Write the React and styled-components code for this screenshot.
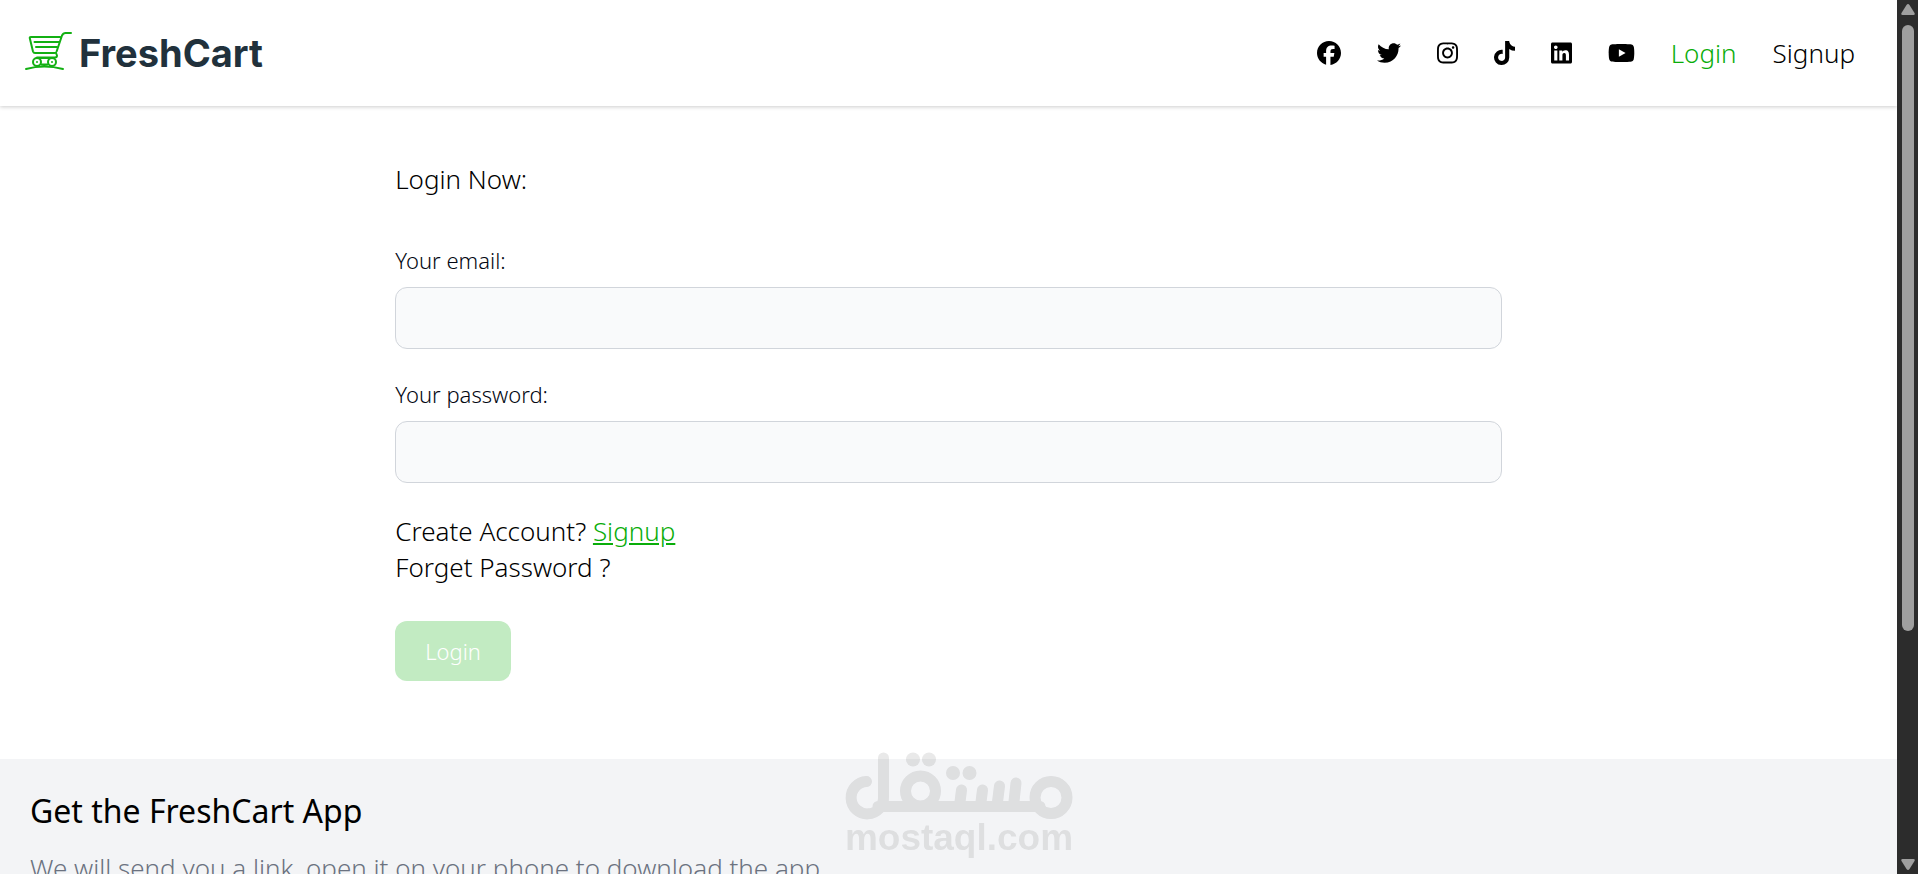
import React from "react";
import styled, { createGlobalStyle } from "styled-components";
import {
  FaFacebook,
  FaTwitter,
  FaInstagram,
  FaTiktok,
  FaLinkedin,
  FaYoutube,
} from "react-icons/fa6";

const GlobalStyle = createGlobalStyle`
  *, *::before, *::after { box-sizing: border-box; }
  body {
    margin: 0;
    background: #fff;
    color: #000;
    font-family: "Noto Sans", "Open Sans", sans-serif;
    font-size: 26px;
    font-weight: 300;
    line-height: 36px;
  }
  h1, h2, p, ul { margin: 0; padding: 0; }
`;

const Shell = styled.div`
  display: flex;
  height: 100vh;
  overflow: hidden;
`;

const Page = styled.div`
  flex: 1;
  min-width: 0;
  overflow: hidden;
`;

const Navbar = styled.header`
  display: flex;
  align-items: center;
  justify-content: space-between;
  padding: 31px 42px 31px 24px;
  box-shadow: 0 1px 4px rgba(0, 0, 0, 0.2);
`;

const Brand = styled.a`
  display: flex;
  align-items: center;
  gap: 5px;
  color: #21313c;
  font-family: Inter, "Liberation Sans", sans-serif;
  font-size: 38px;
  font-weight: 700;
  line-height: 36px;
  text-decoration: none;
`;

const NavList = styled.ul`
  display: flex;
  align-items: center;
  gap: 36px;
  list-style: none;
`;

const SocialLink = styled.a`
  display: block;
  color: #000;

  svg {
    display: block;
    width: ${(p) => p.$width}px;
    height: 24px;
  }
`;

const NavLink = styled.a`
  color: ${(p) => (p.$active ? "#0aad0a" : "#000")};
  text-decoration: none;
`;

const Main = styled.main`
  width: 58.33%;
  margin: 0 auto;
  padding: 55px 0 78px;
`;

const Title = styled.h1`
  font-size: 26px;
  font-weight: 300;
  line-height: 36px;
  margin-bottom: 48px;
`;

const Field = styled.div`
  display: flex;
  flex-direction: column;
  gap: 12px;
  margin-bottom: 30px;
`;

const Label = styled.label`
  color: #030712;
  font-size: 22px;
  line-height: 30px;
`;

const Input = styled.input`
  width: 100%;
  height: 62px;
  padding: 15px;
  border: 1px solid #d1d5db;
  border-radius: 12px;
  background: #f9fafb;
  color: #111827;
  font: inherit;
  font-size: 22px;
  outline: none;
`;

const TextLink = styled.a`
  color: ${(p) => (p.$accent ? "#0aad0a" : "inherit")};
  text-decoration: ${(p) => (p.$accent ? "underline" : "none")};
`;

const SubmitButton = styled.button`
  display: block;
  margin-top: 36px;
  padding: 15px 30px;
  border: 0;
  border-radius: 12px;
  background: #c2ebc2;
  color: #fff;
  font: inherit;
  font-size: 22px;
  line-height: 30px;
`;

const Footer = styled.footer`
  min-height: 300px;
  padding: 31px 30px;
  background: #f3f4f6;
`;

const FooterTitle = styled.h2`
  font-size: 32px;
  font-weight: 400;
  line-height: 42px;
  margin-bottom: 18px;
`;

const FooterText = styled.p`
  color: #6b7280;
`;

const Scrollbar = styled.div`
  display: flex;
  flex-direction: column;
  align-items: center;
  justify-content: space-between;
  width: 21px;
  padding: 4px 0;
  background: #2c2c2c;

  svg {
    display: block;
    width: 14px;
    height: 11px;
    fill: #9f9f9f;
  }
`;

const Track = styled.div`
  flex: 1;
  width: 12px;
  padding: 10px 0;
`;

const Thumb = styled.div`
  height: 73.6%;
  border-radius: 6px;
  background: #9f9f9f;
`;

const Watermark = styled.div`
  position: fixed;
  left: 50%;
  bottom: 18px;
  width: 230px;
  transform: translateX(-50%);
  opacity: 0.085;
  color: #000;
  pointer-events: none;

  svg {
    display: block;
    width: 100%;
  }
`;

const WatermarkText = styled.div`
  font-family: "Liberation Sans", Arial, sans-serif;
  font-size: 37px;
  font-weight: 700;
  line-height: 36px;
  text-align: center;
`;

const socials = [
  { name: "Facebook", icon: FaFacebook, width: 24 },
  { name: "Twitter", icon: FaTwitter, width: 24 },
  { name: "Instagram", icon: FaInstagram, width: 21 },
  { name: "TikTok", icon: FaTiktok, width: 21 },
  { name: "LinkedIn", icon: FaLinkedin, width: 21 },
  { name: "YouTube", icon: FaYoutube, width: 27 },
];

function CartLogo() {
  return (
    <svg
      width="50"
      height="44"
      viewBox="-1 0 50 44"
      fill="none"
      stroke="#13b013"
      strokeWidth="2"
      strokeLinecap="round"
      strokeLinejoin="round"
      aria-hidden="true"
    >
      <path d="M35 6H6q-1.500 0-1.200 1.200L8 20.500Q8.500 22 10 22H29.500Q31 22 31.600 20.500L37 4.500Q38.200 2 40.500 2H46" />
      <path d="M9.500 11H34M11 16H32" />
      <path d="M31 22l1 2.500q0 2-2 2H12" />
      <circle cx="12" cy="31" r="4" />
      <circle cx="27" cy="31" r="4" />
      <path d="M12 27H28M16.500 33.500H22.500M1 38Q19 33 38 38" />
      <circle cx="12" cy="31" r="1" fill="#13b013" stroke="none" />
      <circle cx="27" cy="31" r="1" fill="#13b013" stroke="none" />
    </svg>
  );
}

function WatermarkLogo() {
  return (
    <svg
      viewBox="0 0 230 68"
      fill="none"
      stroke="currentColor"
      strokeWidth="11"
      strokeLinecap="round"
      role="img"
      aria-label="مستقل"
    >
      <path d="M22.500 29.500A16.200 16.200 0 1 0 39.500 45V6M34 54.500H196" />
      <circle cx="76.500" cy="39" r="15" />
      <circle cx="207" cy="45.500" r="16" />
      <path d="M117.500 38L115.500 54M138.500 38L136.500 54M155.500 34L153 54M172 31L169.500 54" />
      <g fill="currentColor" stroke="none">
        <circle cx="69" cy="7.500" r="7" />
        <circle cx="85" cy="7.500" r="7" />
        <circle cx="109" cy="21" r="7" />
        <circle cx="125.500" cy="21" r="7" />
      </g>
    </svg>
  );
}

export default function App() {
  return (
    <>
      <GlobalStyle />
      <Shell>
        <Page>
          <Navbar>
            <Brand href="#home">
              <CartLogo />
              <span>FreshCart</span>
            </Brand>
            <nav>
              <NavList>
                {socials.map(({ name, icon: Icon, width }) => (
                  <li key={name}>
                    <SocialLink href={`#${name.toLowerCase()}`} aria-label={name} $width={width}>
                      <Icon />
                    </SocialLink>
                  </li>
                ))}
                <li>
                  <NavLink href="#login" $active>Login</NavLink>
                </li>
                <li>
                  <NavLink href="#signup">Signup</NavLink>
                </li>
              </NavList>
            </nav>
          </Navbar>
          <Main>
            <Title>Login Now:</Title>
            <form>
              <Field>
                <Label htmlFor="email">Your email:</Label>
                <Input id="email" type="email" />
              </Field>
              <Field>
                <Label htmlFor="password">Your password:</Label>
                <Input id="password" type="password" />
              </Field>
              <p>
                Create Account? <TextLink href="#signup" $accent>Signup</TextLink>
              </p>
              <p>
                <TextLink href="#forget-password">Forget Password ?</TextLink>
              </p>
              <SubmitButton type="submit" disabled>Login</SubmitButton>
            </form>
          </Main>
          <Footer>
            <FooterTitle>Get the FreshCart App</FooterTitle>
            <FooterText>
              We will send you a link, open it on your phone to download the app.
            </FooterText>
          </Footer>
        </Page>
        <Scrollbar aria-hidden="true">
          <svg viewBox="0 0 14 11"><path d="M5.500 1q1.500-2 3 0l5 8q.8 2-1 2H1.500q-1.800 0-1-2z" /></svg>
          <Track>
            <Thumb />
          </Track>
          <svg viewBox="0 0 14 11"><path d="M5.500 10q1.500 2 3 0l5-8q.8-2-1-2H1.500q-1.800 0-1 2z" /></svg>
        </Scrollbar>
      </Shell>
      <Watermark>
        <WatermarkLogo />
        <WatermarkText>mostaql.com</WatermarkText>
      </Watermark>
    </>
  );
}
